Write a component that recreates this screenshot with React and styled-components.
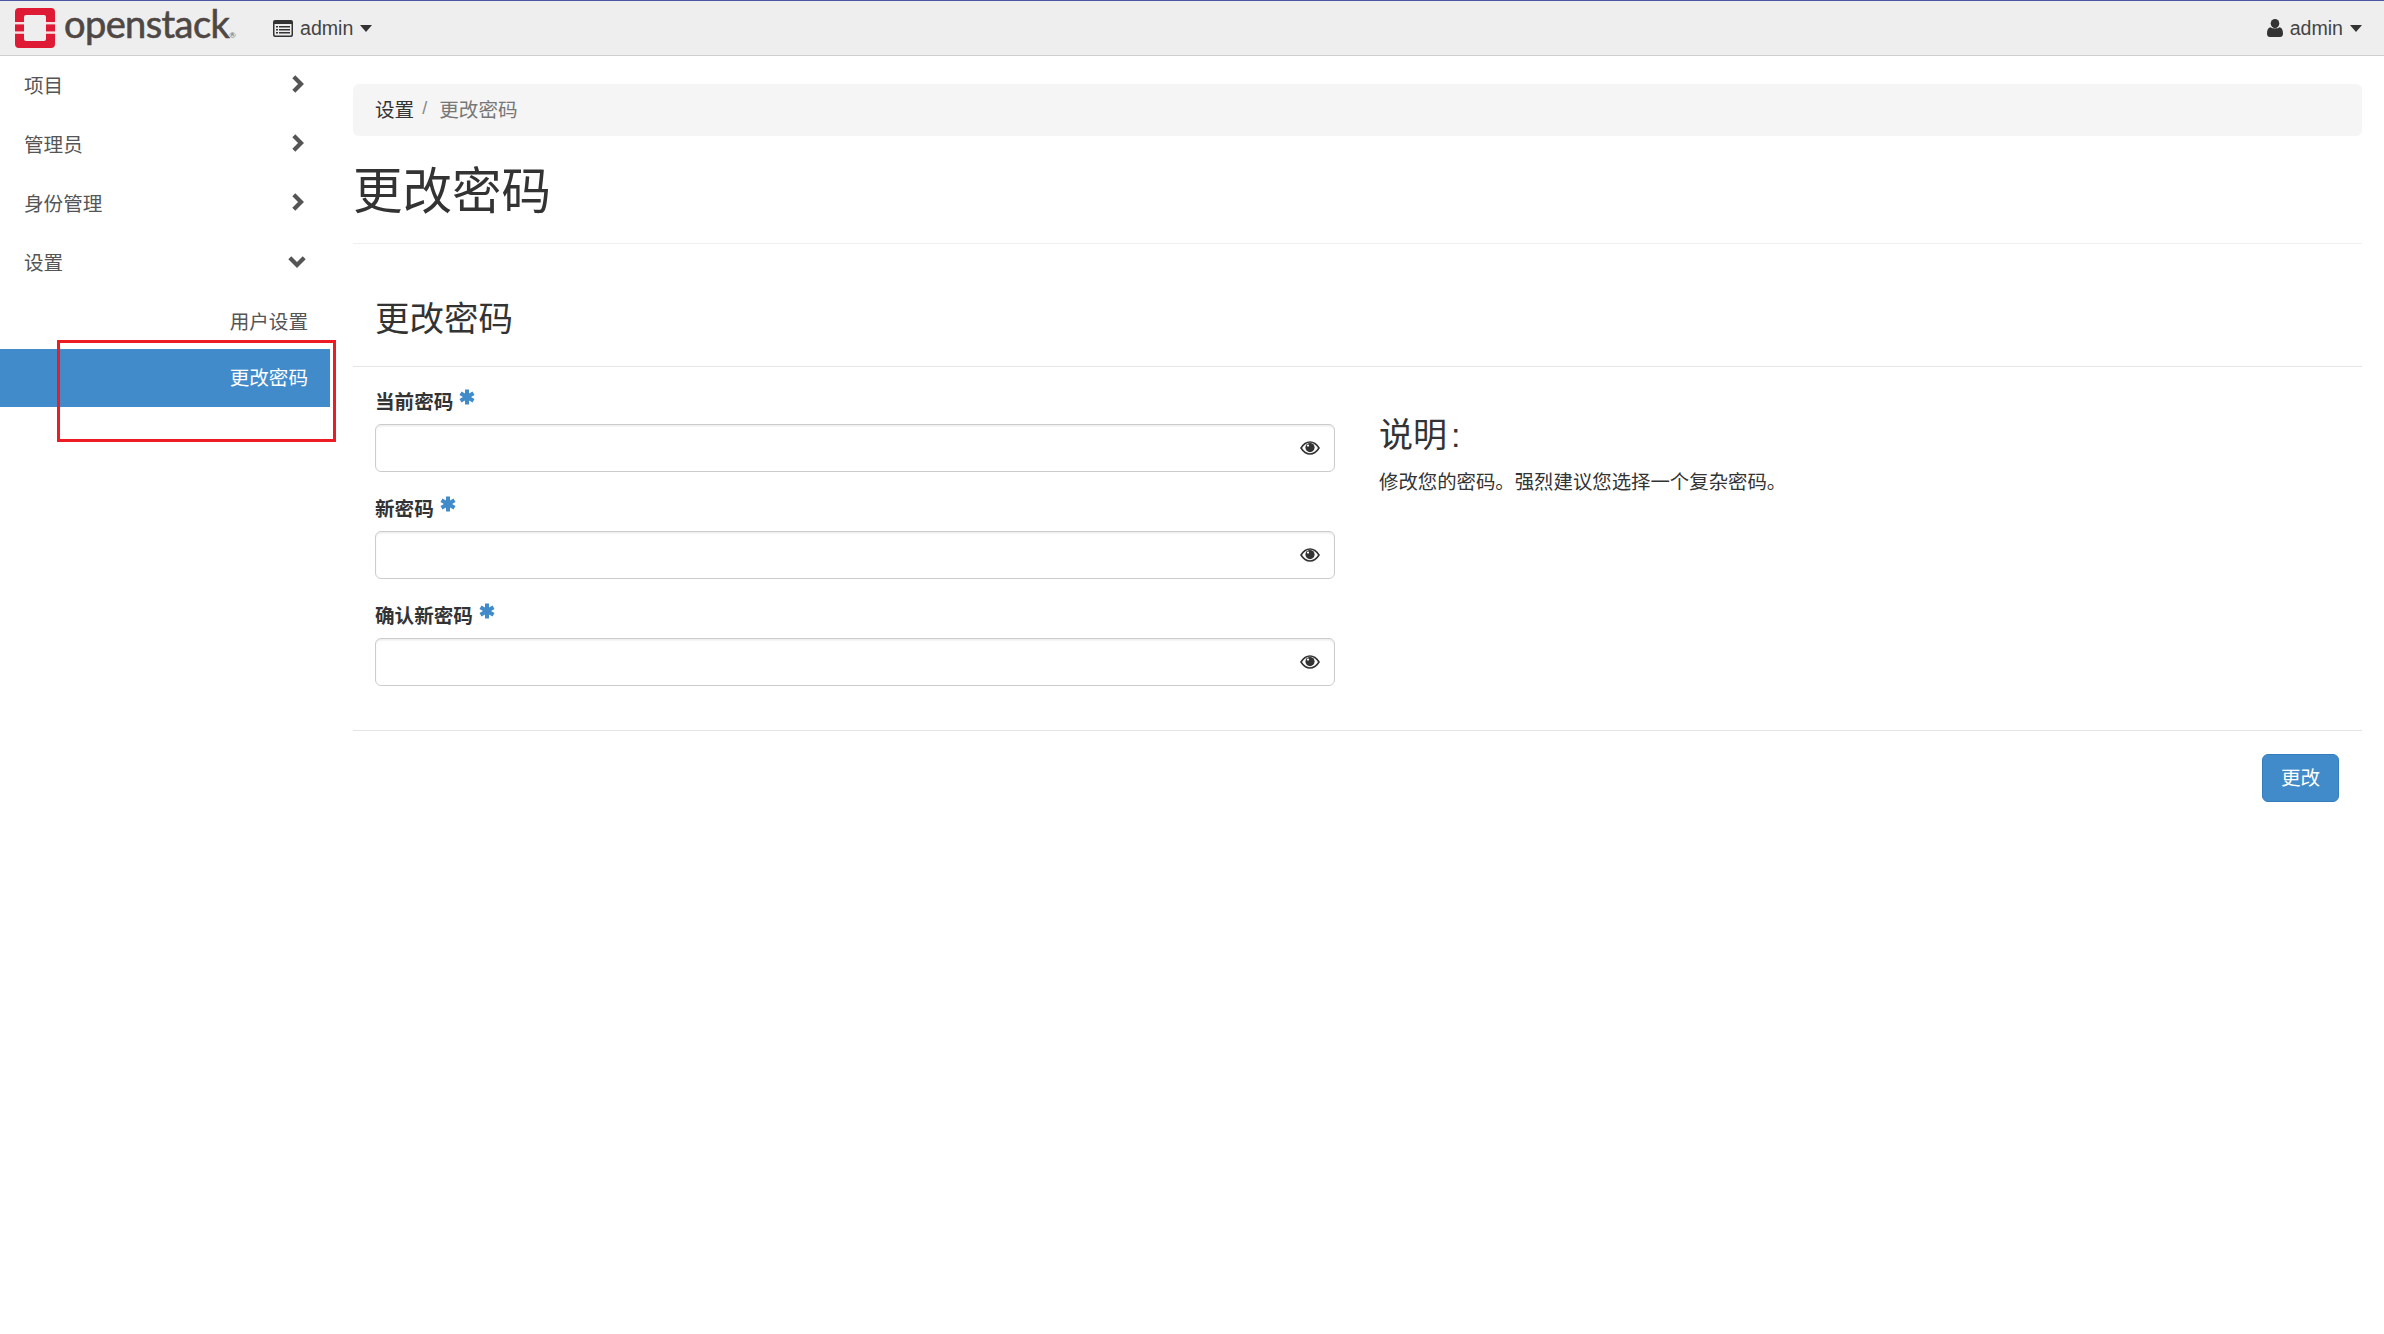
import React from "react";
import styled, { createGlobalStyle } from "styled-components";

const Global = createGlobalStyle`
  * { box-sizing: border-box; }
  html, body { margin: 0; padding: 0; background: #fff; }
  body {
    font-family: "Liberation Sans", "Noto Sans CJK SC", sans-serif;
    font-size: 19.6px;
    color: #333;
    min-height: 1334px;
  }
`;

const Page = styled.div`
  position: relative;
  width: 2384px;
  min-height: 1334px;
`;

const Navbar = styled.header`
  height: 56px;
  background: #eeeeee;
  border-top: 1px solid #4a55a2;
  border-bottom: 1px solid #cfcfcf;
  display: flex;
  align-items: center;
  padding: 0 22px 0 15px;
`;

const Brand = styled.div`
  display: flex;
  align-items: center;
  gap: 9px;
  width: 258px;
`;

const BrandName = styled.span`
  font-family: "Lato", "Open Sans", sans-serif;
  font-size: 38px;
  line-height: 54px;
  color: #4e4744;
  letter-spacing: -0.6px;
  -webkit-text-stroke: 0.6px #4e4744;
  position: relative;
  top: 1px;
`;

const BrandMark = styled.sup`
  font-size: 8px;
  letter-spacing: 0;
  vertical-align: baseline;
  color: #6b6461;
  -webkit-text-stroke: 0;
`;

const NavMenu = styled.div`
  display: flex;
  align-items: center;
  gap: 7px;
  color: #444;
  font-size: 19.6px;
  margin-left: ${p => (p.$end ? "auto" : "0")};
`;

const Caret = styled.span`
  width: 0;
  height: 0;
  margin-left: 0;
  border-top: 7px solid #333;
  border-left: 6px solid transparent;
  border-right: 6px solid transparent;
`;

const Body = styled.div`
  display: flex;
  align-items: flex-start;
`;

const Sidebar = styled.nav`
  width: 330px;
  flex: none;
  margin-top: -1.5px;
`;

const NavRow = styled.div`
  height: 59.2px;
  display: flex;
  align-items: center;
  justify-content: space-between;
  padding: 0 24px 0 24px;
  color: #555;
`;

const ChevronSlot = styled.span`
  width: 24px;
  height: 20px;
  display: flex;
  align-items: center;
  justify-content: center;
  margin-right: -3px;
`;

const SubRow = styled.div`
  height: 58px;
  display: flex;
  align-items: center;
  justify-content: flex-end;
  padding: 0 22px ${p => (p.$active ? "3px" : "0")} 0;
  color: ${p => (p.$active ? "#fff" : "#555")};
  background: ${p => (p.$active ? "#428bca" : "transparent")};
`;

const Main = styled.main`
  flex: 1;
  min-width: 0;
  padding: 28px 22px 0 23px;
`;

const Breadcrumb = styled.div`
  height: 52px;
  background: #f5f5f5;
  border-radius: 6px;
  padding: 0 22px 3px;
  display: flex;
  align-items: center;
  color: #777;
`;

const CrumbLink = styled.span`
  color: #333;
`;

const CrumbSep = styled.span`
  color: #888;
  margin: 0 12px 0 8px;
  font-size: 18px;
`;

const PageHeader = styled.div`
  height: 108px;
  padding-top: 6px;
  border-bottom: 1px solid #eeeeee;
  display: flex;
  align-items: center;
`;

const PageTitle = styled.h1`
  margin: 0;
  font-weight: 400;
  font-size: 49.5px;
  line-height: 1.1;
  color: #333;
`;

const FormHeader = styled.div`
  height: 123px;
  padding: 50px 22px 0;
  border-bottom: 1px solid #e5e5e5;
`;

const FormTitle = styled.h3`
  margin: 0;
  font-weight: 400;
  font-size: 34.5px;
  line-height: 50px;
  color: #333;
`;

const FormBody = styled.div`
  display: grid;
  grid-template-columns: 960px 1fr;
  gap: 44px;
  padding: 0 22px;
  height: 364px;
  border-bottom: 1px solid #e5e5e5;
`;

const Fields = styled.div`
  display: flex;
  flex-direction: column;
`;

const Field = styled.div`
  height: 107px;
  padding-top: 20px;
`;

const Label = styled.label`
  display: flex;
  align-items: flex-start;
  gap: 6px;
  height: 37px;
  font-weight: 700;
  font-size: 19.6px;
  line-height: 30px;
  color: #333;
`;

const RequiredMark = styled.svg`
  width: 16px;
  height: 16px;
  margin-top: 2px;
`;

const InputWrap = styled.div`
  position: relative;
  height: 48px;
`;

const Input = styled.input`
  display: block;
  width: 100%;
  height: 100%;
  border: 1px solid #ccc;
  border-radius: 6px;
  background: #fff;
  box-shadow: inset 0 1.5px 1.5px rgba(0, 0, 0, 0.075);
  outline: none;
`;

const EyeIcon = styled.svg`
  position: absolute;
  right: 15px;
  top: 50%;
  width: 20px;
  height: 14px;
  transform: translateY(-50%);
`;

const Help = styled.aside`
  padding-top: 45px;
`;

const HelpTitle = styled.h3`
  margin: 0;
  font-weight: 400;
  font-size: 34px;
  line-height: 46px;
  color: #333;
`;

const Colon = styled.span`
  margin-left: 4px;
`;

const HelpText = styled.p`
  margin: 11px 0 0;
  font-size: 19.4px;
  line-height: 26px;
  color: #333;
`;

const FormFooter = styled.div`
  display: flex;
  justify-content: flex-end;
  padding: 23px 23px 0;
`;

const SubmitButton = styled.button`
  width: 77px;
  height: 48px;
  border: 1px solid #357ebd;
  border-radius: 6px;
  background: #428bca;
  color: #fff;
  font-family: inherit;
  font-size: 19.6px;
  padding: 0 0 3px;
`;

const Annotation = styled.div`
  position: absolute;
  left: 57px;
  top: 340px;
  width: 279px;
  height: 102px;
  border: 3px solid #ed1c24;
  pointer-events: none;
`;

const Logo = () => (
  <svg width="40" height="40" viewBox="0 0 40 40">
    <path
      fillRule="evenodd"
      fill="#de1a34"
      d="M4 0H36A4 4 0 0 1 40 4V36A4 4 0 0 1 36 40H4A4 4 0 0 1 0 36V4A4 4 0 0 1 4 0ZM11 7A2 2 0 0 0 9 9V31A2 2 0 0 0 11 33H29A2 2 0 0 0 31 31V9A2 2 0 0 0 29 7Z"
    />
    <rect x="0" y="14" width="9" height="2.4" fill="#f5dfe3" />
    <rect x="0" y="23.4" width="9" height="2.4" fill="#f5dfe3" />
    <rect x="31" y="14" width="9" height="2.4" fill="#f5dfe3" />
    <rect x="31" y="23.4" width="9" height="2.4" fill="#f5dfe3" />
  </svg>
);

const ListAlt = () => (
  <svg width="20" height="17" viewBox="0 0 20 17">
    <path
      fillRule="evenodd"
      fill="#333"
      d="M2 0H18A2 2 0 0 1 20 2V15A2 2 0 0 1 18 17H2A2 2 0 0 1 0 15V2A2 2 0 0 1 2 0ZM1.5 4V14.5A1 1 0 0 0 2.5 15.5H17.5A1 1 0 0 0 18.5 14.5V4Z"
    />
    <path fill="#333" d="M3 6h2v1.5H3zM6 6h11v1.5H6zM3 9h2v1.5H3zM6 9h11v1.5H6zM3 12h2v1.5H3zM6 12h11v1.5H6z" />
  </svg>
);

const UserIcon = () => (
  <svg width="16" height="18" viewBox="0 0 16 18">
    <ellipse cx="8" cy="4.6" rx="4.3" ry="4.6" fill="#333" />
    <path fill="#333" d="M3.6 8.2C5 9.8 11 9.8 12.4 8.2C14.6 8.6 16 10.6 16 14.4C16 16.6 14.8 18 13 18H3C1.2 18 0 16.6 0 14.4C0 10.6 1.4 8.6 3.6 8.2Z" />
  </svg>
);

const ChevronRight = () => (
  <svg width="13" height="20" viewBox="0 0 13 20">
    <path d="M2.8 2.8L10 10L2.8 17.2" fill="none" stroke="#555" strokeWidth="4.2" />
  </svg>
);

const ChevronDown = () => (
  <svg width="20" height="13" viewBox="0 0 20 13">
    <path d="M2.8 2.8L10 10L17.2 2.8" fill="none" stroke="#555" strokeWidth="4.2" />
  </svg>
);

const Asterisk = () => (
  <RequiredMark viewBox="0 0 16 16">
    <g stroke="#428bca" strokeWidth="4">
      <path d="M8 0.5V15.5" />
      <path d="M1.5 4.2L14.5 11.8" />
      <path d="M1.5 11.8L14.5 4.2" />
    </g>
  </RequiredMark>
);

const Eye = () => (
  <EyeIcon viewBox="0 0 20 14">
    <path d="M1 7C3.5 3 6.5 1 10 1S16.5 3 19 7C16.5 11 13.5 13 10 13S3.5 11 1 7Z" fill="#fff" stroke="#333" strokeWidth="1.6" />
    <circle cx="10" cy="6.6" r="4.6" fill="#333" />
    <circle cx="8" cy="4.6" r="1.1" fill="#fff" />
  </EyeIcon>
);

const fields = ["当前密码", "新密码", "确认新密码"];
const topNav = ["项目", "管理员", "身份管理"];

export default function App() {
  return (
    <Page>
      <Global />
      <Navbar>
        <Brand>
          <Logo />
          <BrandName>
            openstack<BrandMark>®</BrandMark>
          </BrandName>
        </Brand>
        <NavMenu>
          <ListAlt />
          admin
          <Caret />
        </NavMenu>
        <NavMenu $end>
          <UserIcon />
          admin
          <Caret />
        </NavMenu>
      </Navbar>
      <Body>
        <Sidebar>
          {topNav.map(item => (
            <NavRow key={item}>
              {item}
              <ChevronSlot>
                <ChevronRight />
              </ChevronSlot>
            </NavRow>
          ))}
          <NavRow>
            设置
            <ChevronSlot>
              <ChevronDown />
            </ChevronSlot>
          </NavRow>
          <SubRow>用户设置</SubRow>
          <SubRow $active>更改密码</SubRow>
        </Sidebar>
        <Main>
          <Breadcrumb>
            <CrumbLink>设置</CrumbLink>
            <CrumbSep>/</CrumbSep>
            更改密码
          </Breadcrumb>
          <PageHeader>
            <PageTitle>更改密码</PageTitle>
          </PageHeader>
          <FormHeader>
            <FormTitle>更改密码</FormTitle>
          </FormHeader>
          <FormBody>
            <Fields>
              {fields.map(name => (
                <Field key={name}>
                  <Label>
                    {name}
                    <Asterisk />
                  </Label>
                  <InputWrap>
                    <Input type="password" />
                    <Eye />
                  </InputWrap>
                </Field>
              ))}
            </Fields>
            <Help>
              <HelpTitle>
                说明<Colon>:</Colon>
              </HelpTitle>
              <HelpText>修改您的密码。强烈建议您选择一个复杂密码。</HelpText>
            </Help>
          </FormBody>
          <FormFooter>
            <SubmitButton>更改</SubmitButton>
          </FormFooter>
        </Main>
      </Body>
      <Annotation />
    </Page>
  );
}
